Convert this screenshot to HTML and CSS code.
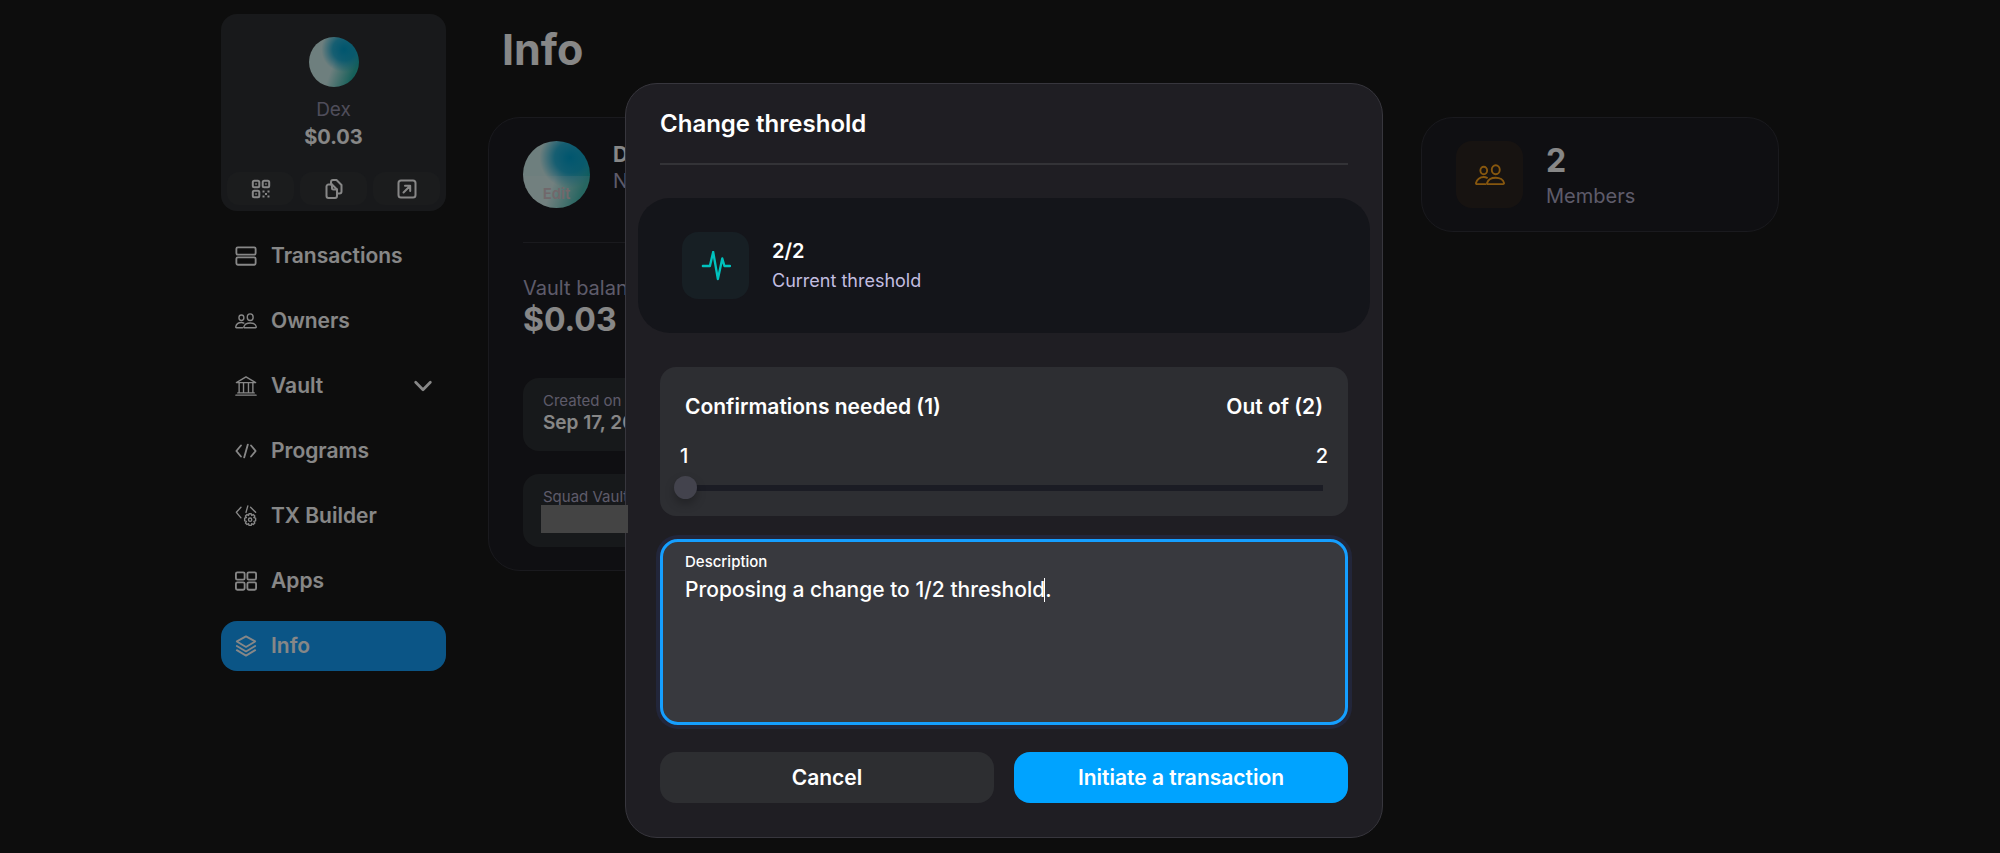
FILE: index.html
```
<!DOCTYPE html>
<html lang="en">

<head>
	<meta charset="UTF-8">
	<meta name="viewport" content="width=device-width, initial-scale=1.0">
	<title>Info</title>
	<link rel="stylesheet" href="styles.css">
</head>

<body>
	<svg class="sprite" aria-hidden="true">
		<symbol id="people" viewBox="0 0 24 24">
			<ellipse cx="7" cy="8.4" rx="2.7" ry="3" />
			<ellipse cx="16.6" cy="7.8" rx="3.2" ry="3.6" />
			<path d="M9.6 14.3C8.8 13.8 7.9 13.6 7 13.6c-3 0-5.7 2-6.2 4.8-.1.6.2.9.8.9h6.7" />
			<path d="M10.2 19.3h12.2c.6 0 .9-.4.8-1-.5-2.5-3.3-4.1-6.6-4.1s-6.1 1.6-6.9 4.1c-.2.6 0 1 .5 1z" />
		</symbol>
	</svg>

	<div class="page">
		<aside class="sidebar">
			<div class="vaultCard">
				<div class="avatar"></div>
				<div class="vaultName">Dex</div>
				<div class="vaultValue">$0.03</div>
				<div class="vaultActions">
					<button aria-label="QR code">
						<svg viewBox="0 0 20 20">
							<rect x="1.8" y="1.8" width="6.5" height="6.5" rx="1.5" />
							<rect x="11.7" y="1.8" width="6.5" height="6.5" rx="1.5" />
							<rect x="1.8" y="11.7" width="6.5" height="6.5" rx="1.5" />
							<path class="dots" d="M4.3 4.3h1.5v1.5h-1.5zM14.2 4.3h1.5v1.5h-1.5zM4.3 14.2h1.5v1.5h-1.5zM11.5 11.5h2v2h-2zM16.5 11.5h2v2h-2zM14 14h2v2h-2zM11.5 16.5h2v2h-2zM16.5 16.5h2v2h-2z" />
						</svg>
					</button>
					<button aria-label="Copy address">
						<svg viewBox="0 0 20 20">
							<path d="M4.5 5.5H8l5 5V17a2 2 0 0 1-2 2H4.5a2 2 0 0 1-2-2V7.5a2 2 0 0 1 2-2z" />
							<path d="M8 5.5v3.500a1.5 1.5 0 0 0 1.5 1.5H13" />
							<path d="M7 5.500V3a2 2 0 0 1 2-2h3.500l5 5v6.500a2 2 0 0 1-2 2H13" />
						</svg>
					</button>
					<button aria-label="Open in explorer">
						<svg viewBox="0 0 20 20">
							<rect x="1.5" y="1.5" width="17" height="17" rx="2.5" />
							<path d="M6.5 13.5l6.5-6.5M8 6.8h5.2V12" />
						</svg>
					</button>
				</div>
			</div>

			<nav class="nav">
				<a href="#transactions">
					<svg viewBox="0 0 24 24"><rect x="1.5" y="2.5" width="21" height="8" rx="1.5" /><rect x="1.5" y="13.5" width="21" height="8" rx="1.5" /></svg>
					Transactions
				</a>
				<a href="#owners">
					<svg class="thin" viewBox="0 0 24 24"><use href="#people" /></svg>
					Owners
				</a>
				<a href="#vault">
					<svg class="thin" viewBox="0 0 24 24">
						<path d="M1.5 8.3L12 2l10.5 6.3zM4.5 8.5v11M9.3 8.5v11M14.7 8.5v11M19.5 8.5v11M3 19.5h18M1 22h22" />
					</svg>
					Vault
					<svg class="chevron" viewBox="0 0 24 24"><path d="M4 8l8 8 8-8" /></svg>
				</a>
				<a href="#programs">
					<svg viewBox="0 0 24 24"><path d="M6.5 6L1.500 12l5 6M17.5 6l5 6-5 6M14 5l-4 14" /></svg>
					Programs
				</a>
				<a href="#builder">
					<svg class="thin" viewBox="0 0 24 24">
						<path d="M6.5 2.5L1.5 8l5 6M14 1l-2 7M17 2.5l5.5 5.5" />
						<circle cx="16.5" cy="16" r="1.8" />
						<path d="M15.3 9.5h2.4l.5 1.9 1.7-1 1.7 1.7-1 1.7 1.9.6v2.9l-1.9.5 1 1.8-1.7 1.7-1.7-1-.5 1.9h-2.4l-.5-1.9-1.7 1-1.7-1.7 1-1.8-1.9-.5v-2.9l1.9-.6-1-1.7 1.7-1.7 1.7 1z" />
					</svg>
					TX Builder
				</a>
				<a href="#apps">
					<svg viewBox="0 0 24 24">
						<rect x="1" y="2.5" width="9.5" height="8" rx="1.5" /><rect x="13.5" y="2.5" width="9.5" height="8" rx="1.5" />
						<rect x="1" y="13.5" width="9.5" height="8" rx="1.5" /><rect x="13.5" y="13.5" width="9.5" height="8" rx="1.5" />
					</svg>
					Apps
				</a>
				<a href="#info" class="active">
					<svg viewBox="0 0 24 24"><path d="M12 1.5l10 5.5-10 6L2 7zM2 12l10 6 10-6M2 16.5l10 6 10-6" /></svg>
					Info
				</a>
			</nav>
		</aside>

		<main class="main">
			<h1>Info</h1>
			<div class="cards">
				<section class="card infoCard">
					<div class="profile">
						<div class="avatar large"><button class="edit">Edit</button></div>
						<div>
							<div class="profileName">Dex</div>
							<div class="muted">No description</div>
						</div>
					</div>
					<div class="balance">
						<div class="muted">Vault balance</div>
						<div class="big">$0.03</div>
					</div>
					<div class="detail">
						<div class="detailLabel">Created on</div>
						<div class="detailValue">Sep 17, 2023</div>
					</div>
					<div class="detail">
						<div class="detailLabel">Squad Vault</div>
						<div class="redacted"></div>
					</div>
				</section>

				<section class="card membersCard">
					<div class="tile orange">
						<svg viewBox="0 0 24 24"><use href="#people" /></svg>
					</div>
					<div>
						<div class="big">2</div>
						<div class="muted">Members</div>
					</div>
				</section>
			</div>
		</main>
	</div>

	<div class="overlay">
		<form class="modal" role="dialog" aria-labelledby="modalTitle">
			<h2 id="modalTitle">Change threshold</h2>

			<div class="current">
				<div class="tile teal">
					<svg viewBox="0 0 32 32"><path d="M2 16h7.5L13 1l5 29 4.7-22L25 16h6" /></svg>
				</div>
				<div>
					<div class="currentValue">2/2</div>
					<div class="currentLabel">Current threshold</div>
				</div>
			</div>

			<div class="confirmations">
				<div class="row">
					<label for="threshold">Confirmations needed (1)</label>
					<span>Out of (2)</span>
				</div>
				<div class="marks"><span>1</span><span>2</span></div>
				<input type="range" id="threshold" min="1" max="2" value="1">
			</div>

			<div class="field">
				<label for="description">Description</label>
				<textarea id="description" spellcheck="false">Proposing a change to 1/2 threshold.</textarea>
				<span class="caret"></span>
			</div>

			<div class="buttons">
				<button type="button">Cancel</button>
				<button type="button" class="primary">Initiate a transaction</button>
			</div>
		</form>
	</div>
</body>

</html>
```
FILE: styles.css
```
* {
	box-sizing: border-box;
}

body {
	margin: 0;
	background-color: #191919;
	color: #fff;
	font-family: Inter, "Open Sans", sans-serif;
	font-size: 21px;
	line-height: 24px;
}

button,
textarea {
	font: inherit;
	color: inherit;
	border: none;
}

button {
	cursor: pointer;
}

svg {
	fill: none;
	stroke: currentColor;
	stroke-width: 2;
	stroke-linecap: round;
	stroke-linejoin: round;
	flex: none;
}

.sprite {
	display: none;
}

.page {
	display: flex;
	gap: 42px;
	max-width: 1558px;
	margin: 0 auto;
	padding-top: 14px;
}

/* sidebar */

.sidebar {
	flex: 0 0 225px;
}

.vaultCard {
	display: flex;
	flex-direction: column;
	align-items: center;
	padding: 23px 6px 6px;
	border-radius: 16px;
	background-color: #2e3033;
}

.avatar {
	width: 50px;
	height: 50px;
	border-radius: 50%;
	overflow: hidden;
	background-image:
		radial-gradient(circle at 70% 25%, #00a2d0 0, #00a2d0cc 22%, #00a2d000 44%),
		linear-gradient(110deg, #d0f0ee 50%, #2bb5aa 85%);
}

.vaultName {
	margin-top: 11px;
	font-size: 19px;
	color: #9592aa;
}

.vaultValue {
	margin-top: 3px;
	font-size: 20px;
	font-weight: 700;
}

.vaultActions {
	display: flex;
	gap: 6px;
	width: 100%;
	margin-top: 23px;
}

.vaultActions button {
	flex: 1;
	display: flex;
	align-items: center;
	justify-content: center;
	height: 33px;
	padding: 0;
	border-radius: 12px;
	background-color: #333538;
}

.vaultActions svg {
	width: 20px;
	height: 20px;
	stroke-width: 2;
}

.vaultActions .dots {
	fill: currentColor;
	stroke: none;
}

.nav {
	display: flex;
	flex-direction: column;
	gap: 15px;
	margin-top: 20px;
}

.nav a {
	display: flex;
	align-items: center;
	gap: 14px;
	height: 50px;
	padding: 0 12px 0 14px;
	border-radius: 16px;
	color: #fff;
	font-weight: 600;
	text-decoration: none;
}

.nav svg {
	width: 22px;
	height: 22px;
}

.nav .thin {
	stroke-width: 1.5;
}

.nav .chevron {
	margin-left: auto;
	stroke-width: 3;
}

.nav .active {
	background-color: #15a0fd;
}

/* main column */

.main {
	flex: 1;
	min-width: 0;
}

h1 {
	margin: 10px 14px 43px;
	font-size: 43px;
	line-height: 50px;
	font-weight: 700;
}

.cards {
	display: grid;
	grid-template-columns: 1fr 358px;
	align-items: start;
	gap: 42px;
}

.card {
	border: 1px solid #313139;
	border-radius: 32px;
	background-color: #1d1d22;
}

.infoCard {
	padding: 23px 34px;
}

.profile {
	display: flex;
	gap: 23px;
	padding-bottom: 34px;
	border-bottom: 1px solid #313139;
}

.avatar.large {
	display: flex;
	align-items: flex-end;
	width: 67px;
	height: 67px;
}

.edit {
	width: 100%;
	height: 32px;
	padding: 4px 0 0;
	background-color: #ffffff26;
	color: #d6c4ca;
	font-size: 15px;
	line-height: 20px;
	font-weight: 600;
}

.profileName {
	margin-top: 2px;
	font-weight: 700;
}

.muted {
	font-size: 20px;
	color: #b1acc8;
}

.profile .muted {
	margin-top: 2px;
}

.balance {
	padding: 33px 0 38px;
}

.big {
	font-size: 32px;
	line-height: 40px;
	font-weight: 700;
}

.detail {
	height: 73px;
	padding: 13px 20px;
	border-radius: 16px;
	background-color: #2d3033;
}

.detail + .detail {
	margin-top: 23px;
}

.detailLabel {
	font-size: 15px;
	line-height: 20px;
	color: #b1acc8;
}

.detailValue {
	font-size: 19px;
	font-weight: 600;
}

/* stays above the overlay */
.redacted {
	position: relative;
	z-index: 20;
	width: 87px;
	height: 28px;
	margin: -2px;
	background-color: #444;
}

.membersCard {
	display: flex;
	gap: 23px;
	padding: 23px 34px;
}

.membersCard .muted {
	margin-top: 3px;
}

.tile {
	display: flex;
	align-items: center;
	justify-content: center;
	width: 67px;
	height: 67px;
	border-radius: 16px;
}

.tile svg {
	width: 30px;
	height: 30px;
}

.orange {
	background-color: #2d2420;
	color: #ffa51c;
}

.orange svg {
	stroke-width: 1.5;
}

.teal {
	background-color: #171f24;
	color: #00c2be;
}

.teal svg {
	stroke-width: 2.5;
}

/* modal */

.overlay {
	position: fixed;
	inset: 0;
	z-index: 10;
	display: flex;
	align-items: flex-start;
	justify-content: center;
	padding: 83px 0 0 8px;
	background-color: rgba(0, 0, 0, 0.47);
}

.modal {
	width: 758px;
	padding: 24px 34px 34px;
	border: 1px solid #37363d;
	border-radius: 32px;
	background-color: #1f1e23;
}

.modal h2 {
	margin: 0;
	padding-bottom: 23px;
	border-bottom: 2px solid #333337;
	font-size: 24px;
	line-height: 32px;
	font-weight: 600;
}

.current {
	display: flex;
	align-items: center;
	gap: 23px;
	height: 135px;
	margin: 33px -22px 34px;
	padding: 0 44px;
	border-radius: 32px;
	background-color: #14151a;
}

.currentValue {
	font-size: 20px;
	font-weight: 600;
}

.currentLabel {
	margin-top: 6px;
	font-size: 18px;
	color: #c3bee0;
}

.confirmations {
	height: 149px;
	padding: 28px 14px 0;
	border-radius: 16px;
	background-color: #2d2e32;
}

.row {
	display: flex;
	justify-content: space-between;
	padding: 0 11px;
	font-weight: 600;
}

.marks {
	display: flex;
	justify-content: space-between;
	margin-top: 25px;
	padding: 0 6px;
	font-size: 20px;
	font-weight: 500;
}

#threshold {
	appearance: none;
	display: block;
	width: 100%;
	height: 23px;
	margin: 8px 0 0;
	background: none;
}

#threshold::-webkit-slider-runnable-track {
	height: 23px;
	background: linear-gradient(#1b1c24, #1b1c24) center / calc(100% - 23px) 6px no-repeat;
}

#threshold::-webkit-slider-thumb {
	appearance: none;
	width: 23px;
	height: 23px;
	border-radius: 50%;
	background-color: #43434d;
	box-shadow: 0 5px 10px rgba(0, 0, 0, 0.25);
}

.field {
	position: relative;
	height: 186px;
	margin-top: 23px;
	padding: 10px 22px;
	border: 3px solid #159fff;
	border-radius: 18px;
	background-color: #38393e;
	box-shadow: 0 0 0 4px #22263a;
}

.field label {
	display: block;
	font-size: 15px;
	line-height: 20px;
	font-weight: 500;
}

.field textarea {
	display: block;
	width: 100%;
	height: 120px;
	margin-top: 6px;
	padding: 0;
	background: none;
	font-weight: 500;
	outline: none;
	resize: none;
}

.caret {
	position: absolute;
	top: 36px;
	left: 381px;
	width: 1px;
	height: 24px;
	background-color: #fff;
}

.buttons {
	display: flex;
	gap: 20px;
	margin-top: 27px;
}

.buttons button {
	flex: 1;
	height: 51px;
	border-radius: 16px;
	background-color: #2d2e31;
	font-weight: 600;
}

.buttons .primary {
	background-color: #00a3ff;
}
```
